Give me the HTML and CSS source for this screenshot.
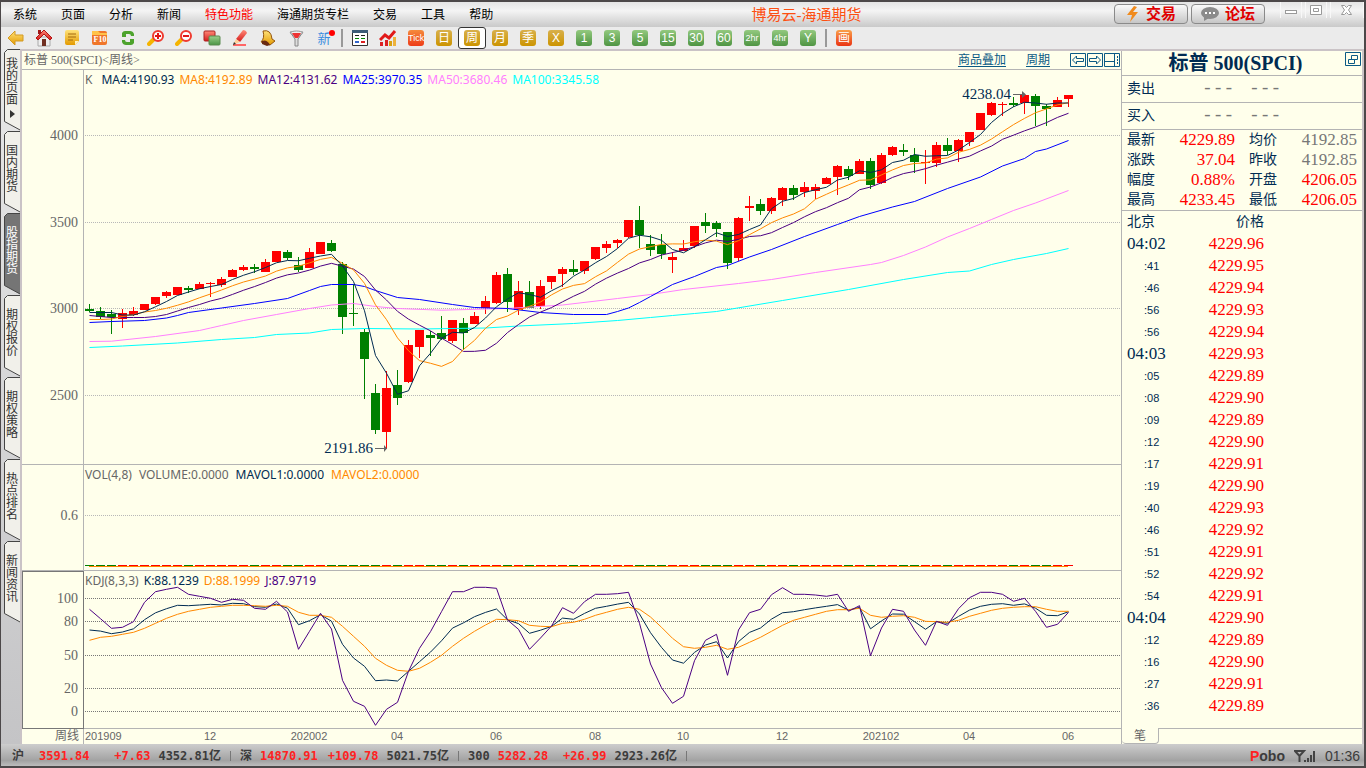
FILE: index.html
```
<!DOCTYPE html>
<html lang="zh-CN">
<head>
<meta charset="utf-8">
<title>博易云-海通期货</title>
<link rel="stylesheet" href="styles.css">
</head>
<body>
<div class="window">
  <header class="menubar">
    <nav class="menu">
      <button>系统</button><button>页面</button><button>分析</button><button>新闻</button><button class="hot">特色功能</button><button>海通期货专栏</button><button>交易</button><button>工具</button><button>帮助</button>
    </nav>
    <h1 class="app-title">博易云-海通期货</h1>
    <div class="quick">
      <button class="pill"><svg width="14" height="16" viewBox="0 0 14 16"><path d="M8 0 1 9h5l-2 7 8-10H7l4-5z" fill="#f08a1c"/></svg>交易</button>
      <button class="pill"><svg width="18" height="14" viewBox="0 0 18 14"><ellipse cx="9" cy="6" rx="9" ry="6" fill="#8b8b8b"/><path d="M3 9v5l5-3z" fill="#8b8b8b"/><path d="M4 5h2v2H4zM8 5h2v2H8zM12 5h2v2h-2z" fill="#fff"/></svg>论坛</button>
    </div>
    <div class="winctl">
      <button aria-label="最小化"><svg width="14" height="12"><rect x="1.500" y="6.500" width="11" height="3" fill="#fff" stroke="#999"/></svg></button>
      <button aria-label="最大化"><svg width="14" height="12"><path d="M1.500 1.500h11v9h-11zM4.500 4.500h5v3h-5z" fill="#fff" stroke="#999"/></svg></button>
      <button class="close" aria-label="关闭"><svg width="14" height="12"><path d="M1.500 1.500h3l2 2 2-2h3L8.500 6l3 4.500h-3l-2-2-2 2h-3l3-4.500z" fill="#fff" stroke="#999"/></svg></button>
    </div>
  </header>

  <div class="toolbar">
    <svg width="0" height="0" class="defs"><defs>
      <linearGradient id="gold" x2="0" y2="1"><stop offset="0" stop-color="#ffe27a"/><stop offset="1" stop-color="#e39a00"/></linearGradient>
      <linearGradient id="red" x2="0" y2="1"><stop offset="0" stop-color="#ff8a78"/><stop offset="1" stop-color="#d41a1a"/></linearGradient>
      <linearGradient id="green" x2="0" y2="1"><stop offset="0" stop-color="#9bd08c"/><stop offset="1" stop-color="#4a9445"/></linearGradient>
    </defs></svg>
    <button aria-label="后退"><svg width="18" height="18"><path d="M1 9 8 2v4h8v6H8v4z" fill="url(#gold)" stroke="#d39a22"/></svg></button>
    <button aria-label="首页"><svg width="18" height="18"><path d="M3 8h12v9H3z" fill="#eee" stroke="#aaa"/><path d="M3 1h3v4H3z" fill="#a01717"/><path d="M9 1 1 9l2 2 6-6 6 6 2-2z" fill="url(#red)" stroke="#b31414"/><path d="M7 10h4v7H7z" fill="#703022"/></svg></button>
    <button aria-label="资讯"><svg width="18" height="18"><path d="M2 3q0-2 2-2h10q2 0 2 2v9l-4 4H4q-2 0-2-2z" fill="url(#gold)"/><path d="M5 5h8M5 8h8M5 11h5" stroke="#a56a10"/><path d="m12 16 4-4h-4z" fill="#fff3c0"/></svg></button>
    <button aria-label="F10资料"><svg width="18" height="18"><rect x="1" y="2" width="15" height="14" rx="2" fill="#f0762a"/><path d="M1 2h6l2 2h7v2H1z" fill="#ffc34a"/><text x="9" y="13" class="f10">F10</text></svg></button>
    <button aria-label="刷新"><svg width="18" height="18"><path d="M3 8V4q1-2 3-2h5q3 0 4 3v2h-3q0-2-2-2H7v3zM15 10v4q-1 2-3 2H7q-3 0-4-3v-2h3q0 2 2 2h3v-3z" fill="#4da32d"/></svg></button>
    <button aria-label="放大"><svg width="18" height="18"><path d="m7 10-5 5" stroke="#f5b400" stroke-width="4" stroke-linecap="round"/><circle cx="11" cy="7" r="5" fill="#fff" stroke="#ef3b30" stroke-width="2"/><path d="M8 7h6M11 4v6" stroke="#e01818" stroke-width="2"/></svg></button>
    <button aria-label="缩小"><svg width="18" height="18"><path d="m7 10-5 5" stroke="#f5b400" stroke-width="4" stroke-linecap="round"/><circle cx="11" cy="7" r="5" fill="#fff" stroke="#ef3b30" stroke-width="2"/><path d="M8 7h6" stroke="#e01818" stroke-width="2"/></svg></button>
    <button aria-label="叠加"><svg width="18" height="18"><rect x="1" y="2" width="11" height="10" rx="1" fill="url(#red)" stroke="#a22"/><rect x="6" y="7" width="11" height="9" rx="1" fill="url(#green)" stroke="#5a8c50"/></svg></button>
    <button aria-label="画线"><svg width="18" height="18"><path d="M2 16h13" stroke="#f66" stroke-width="2"/><path d="m5 10 7-9q3 0 4 3l-7 9z" fill="url(#red)"/><path d="m5 10 4 3-7 3z" fill="#ffcf9a"/><path d="m2 16 1-3 2 2z" fill="#333"/></svg></button>
    <button aria-label="预警"><svg width="18" height="18"><path d="M4 2q8-2 9 8l3 2-5 4-9-3q4-4 2-11z" fill="url(#gold)" stroke="#95560c"/><path d="M3 12q5-2 8 4l-3 1-5-2z" fill="#6a2a10"/></svg></button>
    <button aria-label="筛选"><svg width="18" height="18"><path d="M3 3h13l-5 7v7H8v-7z" fill="#ddd" stroke="#888"/><ellipse cx="9.500" cy="4" rx="6" ry="2" fill="#eee" stroke="#999"/><path d="M5 4h9l-3 5H8z" fill="#e33"/></svg></button>
    <button class="new" aria-label="新功能">新<i></i></button>
    <span class="sep"></span>
    <button aria-label="报价"><svg width="18" height="18"><path d="M1.500 1.500h15v15h-15z" fill="#fff" stroke="#333"/><path d="M1 1h16v3H1z" fill="#3c5c78"/><path d="M4 6.500h4M10 6.500h4" stroke="#222"/><path d="M4 9.500h4M10 9.500h4" stroke="#080"/><path d="M4 13h4" stroke="#36c" stroke-width="2"/><path d="M10 13h4" stroke="#d22" stroke-width="2"/></svg></button>
    <button aria-label="走势"><svg width="18" height="18"><path d="M1 13h3v4H1zM6 11h3v6H6z" fill="#d22"/><path d="M10 12h3v5h-3z" fill="#d8a010"/><path d="M14 8h3v9h-3z" fill="#edb23c"/><path d="m1 11 5-5 4 3 6-7" fill="none" stroke="#e11919" stroke-width="3"/></svg></button>
    <button class="chip tick"><span>Tick</span></button>
    <button class="chip gold"><span>日</span></button>
    <button class="chip gold on"><span>周</span></button>
    <button class="chip gold"><span>月</span></button>
    <button class="chip gold"><span>季</span></button>
    <button class="chip gold"><span>X</span></button>
    <button class="chip green"><span>1</span></button>
    <button class="chip green"><span>3</span></button>
    <button class="chip green"><span>5</span></button>
    <button class="chip green"><span>15</span></button>
    <button class="chip green"><span>30</span></button>
    <button class="chip green"><span>60</span></button>
    <button class="chip green small"><span>2hr</span></button>
    <button class="chip green small"><span>4hr</span></button>
    <button class="chip green"><span>Y</span></button>
    <span class="sep"></span>
    <button class="chip draw"><span>画</span></button>
  </div>

  <main class="body">
    <nav class="tabs" id="tabs"></nav>

    <section class="chart">
      <div class="chart-head">
        <span>标普 500(SPCI)&lt;周线&gt;</span>
        <div class="head-links">
          <a href="#">商品叠加</a><a href="#">周期</a>
          <div class="head-btns">
            <button aria-label="左移"><svg width="17" height="15"><path d="M.5.5h15v13H.5zM2.500 7l4-4v2.500h7v3h-7V11z" fill="none" stroke="#0b5a85"/></svg></button>
            <button aria-label="右移"><svg width="17" height="15"><path d="M.5.5h15v13H.5zM13.500 7l-4-4v2.500h-7v3h7V11z" fill="none" stroke="#0b5a85"/></svg></button>
            <button aria-label="分栏"><svg width="17" height="15"><path d="M.5.5h15v13H.5zM10.500 1v13M1 8.500h9" fill="none" stroke="#0b5a85"/><path d="M13.500 3v9" stroke="#0b5a85" stroke-dasharray="2 1"/></svg></button>
          </div>
        </div>
      </div>
      <div class="axis"><svg><text x="56" y="70">4000</text><text x="56" y="157">3500</text><text x="56" y="243">3000</text><text x="56" y="330">2500</text></svg></div>
      <div class="pane">
        <div class="legend"><span class="k">K</span><span class="navy">MA4:4190.93</span><span class="orange">MA8:4192.89</span><span class="purple">MA12:4131.62</span><span class="blue">MA25:3970.35</span><span class="pink">MA50:3680.46</span><span class="cyan">MA100:3345.58</span></div>
        <svg id="price" role="img" aria-label="K线"></svg>
      </div>
      <div class="axis"><svg><text x="56" y="55">0.6</text></svg></div>
      <div class="pane">
        <div class="legend loose"><span>VOL(4,8)</span><span>VOLUME:0.0000</span><span class="navy">MAVOL1:0.0000</span><span class="orange">MAVOL2:0.0000</span></div>
        <svg id="volume" role="img" aria-label="成交量"></svg>
      </div>
      <div class="axis focus"><svg><text x="55" y="31">100</text><text x="55" y="54">80</text><text x="55" y="88">50</text><text x="55" y="121">20</text><text x="55" y="144">0</text></svg></div>
      <div class="pane">
        <div class="legend"><span>KDJ(8,3,3)</span><span class="navy">K:88.1239</span><span class="orange">D:88.1999</span><span class="purple">J:87.9719</span></div>
        <svg id="kdj" role="img" aria-label="KDJ"></svg>
      </div>
      <div class="axis period">周线</div>
      <div class="pane dates"><svg id="dates"></svg></div>
    </section>

    <aside class="quote">
      <div class="quote-title"><h2>标普 500(SPCI)</h2><button aria-label="弹出"><svg width="17" height="15"><path d="M.5.5h15v13H.5z" fill="none" stroke="#0b5a85"/><path d="M6.500 3.500h6v4h-6z" fill="none" stroke="#0b5a85"/><path d="M3.500 7.500h6v4h-6z" fill="#ffffeb" stroke="#0b5a85"/></svg></button></div>
      <div class="book"><span>卖出</span><span class="dash">---</span><span class="dash">---</span></div>
      <div class="book"><span>买入</span><span class="dash">---</span><span class="dash">---</span></div>
      <table class="stats">
        <tr><th>最新</th><td>4229.89</td><th class="second">均价</th><td class="flat">4192.85</td></tr>
        <tr><th>涨跌</th><td>37.04</td><th class="second">昨收</th><td class="flat">4192.85</td></tr>
        <tr><th>幅度</th><td>0.88%</td><th class="second">开盘</th><td>4206.05</td></tr>
        <tr><th>最高</th><td>4233.45</td><th class="second">最低</th><td>4206.05</td></tr>
      </table>
      <div class="tape">
        <table class="ticks">
          <thead><tr><th>北京</th><th>价格</th></tr></thead>
          <tbody id="ticks"></tbody>
        </table>
      </div>
      <div class="quote-foot"><button>笔</button><span></span></div>
    </aside>
  </main>

  <footer class="status">
    <div class="index"><span class="name">沪</span><span class="up">3591.84</span><span class="up chg">+7.63</span><span>4352.81亿</span></div>
    <div class="index"><span>深</span><span class="up">14870.91</span><span class="up chg">+109.78</span><span>5021.75亿</span></div>
    <div class="index"><span>300</span><span class="up">5282.28</span><span class="up chg">+26.99</span><span>2923.26亿</span></div>
    <div class="sys"><span class="brand"><b>P</b>obo</span><svg width="22" height="13"><path d="M1 1h9L5.500 6zM5.500 5v7" fill="none" stroke="#444" stroke-width="2"/><path d="M10 10h2v2h-2zM13 8h2v4h-2zM16 5h2v7h-2zM19 1h2v11h-2z" fill="#444"/></svg><time>01:36</time></div>
  </footer>
</div>
<script src="app.js"></script>
</body>
</html>
```
FILE: styles.css
```
* { box-sizing: border-box; }
body {
  margin: 0;
  font: 12px/1 "Liberation Serif", "Noto Sans CJK SC", serif;
  color: #002b52;
}
button {
  margin: 0;
  padding: 0;
  border: 0;
  background: none;
  font: inherit;
  color: inherit;
}
svg { display: block; }
.window {
  display: flex;
  flex-direction: column;
  height: 100vh;
  border: solid #4c4849;
  border-width: 2px 2px 2px 1px;
  background: #ebebeb;
}
.defs { position: absolute; }

.menubar {
  display: flex;
  flex: none;
  height: 25px;
  background: linear-gradient(#e4e4e4, #f4f4f4 35%, #c9c9c9);
}
.menu { display: flex; color: #000; }
.menu button { padding: 1px 12px 0; }
.menu .hot { color: #f00; }
.app-title {
  flex: 1;
  margin: 0;
  padding-right: 6px;
  text-align: center;
  font-size: 15px;
  font-weight: 400;
  line-height: 26px;
  color: #fd4f11;
}
.quick { display: flex; gap: 3px; padding: 2px 15px 3px 0; }
.pill {
  display: flex;
  align-items: center;
  justify-content: center;
  gap: 6px;
  width: 74px;
  border: 1px solid #8a8a8a;
  border-radius: 4px;
  background: linear-gradient(#fafafa, #c6c6c6);
  font-size: 15px;
  font-weight: 700;
  color: #e00000;
}
.winctl { display: flex; gap: 3px; padding-bottom: 9px; }
.winctl button {
  display: grid;
  place-items: center;
  width: 22px;
  border: solid #f8f8f8;
  border-width: 0 1px;
}
.winctl .close { width: 34px; }

.toolbar {
  display: flex;
  flex: none;
  height: 24px;
  padding-left: 1px;
  border-bottom: 2px solid #cac3c6;
  background: #ebebeb;
}
.toolbar button { display: grid; place-items: center; width: 28px; }
.sep { width: 2px; margin: 2px 3px; background: #999; }
.f10 { font: 700 8px "Liberation Serif", serif; text-anchor: middle; fill: #fff; }
.toolbar .new { position: relative; font-size: 13px; color: #3a8de0; }
.new i {
  position: absolute;
  top: 3px;
  right: 3px;
  width: 6px;
  height: 6px;
  border-radius: 50%;
  background: #f00;
}
.chip span {
  width: 16px;
  height: 16px;
  border-radius: 3px;
  font: 12px/16px "Liberation Sans", "Noto Sans CJK SC", sans-serif;
  color: #fff;
}
.chip.tick span { background: linear-gradient(#f58a3c, #ee3c18); font-size: 9px; }
.chip.gold span { background: linear-gradient(#d8b04c, #cc9400); }
.chip.green span { background: linear-gradient(#93c97f, #4f9543); }
.chip.small span { font-size: 9px; }
.chip.draw span { background: linear-gradient(#f9a04a, #ea3412); }
.toolbar .on { border: 1px solid #333; border-radius: 3px; background: #fff; }

.body {
  display: grid;
  flex: 1;
  grid-template-columns: 21px 1fr 243px;
  grid-template-rows: minmax(0, 1fr);
  min-height: 0;
}
.tabs {
  display: flex;
  flex-direction: column;
  padding-left: 3px;
  margin-top: -2px;
  border-right: 2px solid #cac3c6;
  background: linear-gradient(#e8e8e8, #c4c4c6);
}
.tabs button {
  position: relative;
  display: flex;
  flex: none;
  flex-direction: column;
  align-items: center;
  height: 82px;
  padding-top: 14px;
  color: #333;
}
.tabs button:first-child { padding-top: 9px; }
.tabs svg { position: absolute; inset: 0; }
.tabs polygon { fill: #f1f0ea; stroke: #444; }
.tabs .on polygon { fill: #757575; }
.tabs .on { color: #fff; }
.tabs span { position: relative; width: 12px; line-height: 12px; word-break: break-all; }
.tabs em { position: relative; margin-top: 4px; border: solid transparent; border-width: 4px 0 4px 5px; border-left-color: #333; }

.chart {
  display: grid;
  grid-template-columns: 62px 1fr;
  grid-template-rows: 19px minmax(0, 395fr) minmax(0, 106fr) minmax(0, 158fr) 15px;
  min-width: 0;
  background: #ffffeb;
  color: #666;
}
.chart-head {
  grid-column: 1 / 3;
  display: flex;
  justify-content: space-between;
  align-items: center;
  padding-left: 2px;
  border-bottom: 1px solid #b4b4b4;
}
.head-links { display: flex; align-items: center; }
.head-links a { margin-right: 20px; color: #0b5a85; text-underline-offset: 2px; }
.head-btns { display: flex; }
.axis { overflow: hidden; border-right: 1px solid #b4b4b4; border-bottom: 1px solid #b4b4b4; }
.axis svg { width: 100%; height: 100%; }
.axis text { font-size: 14px; text-anchor: end; fill: #666; }
.axis.focus { border: 1px solid #777; }
.axis.period { border-bottom: 0; padding-right: 4px; text-align: right; line-height: 14px; }
.pane { position: relative; min-width: 0; overflow: hidden; border-bottom: 1px solid #b4b4b4; }
.pane svg { width: 100%; height: 100%; }
.pane.dates { border-bottom: 0; }
.dates text { font: 11px "Liberation Sans", sans-serif; fill: #666; text-anchor: middle; }
.dates .start { text-anchor: start; }
.legend {
  position: absolute;
  top: 1px;
  left: 1px;
  display: flex;
  gap: 5px;
  font: 12px/17px "Noto Sans", sans-serif;
}
.legend.loose { gap: 7px; }
.legend .k { margin-right: 4px; }
.navy { color: #002b52; }
.orange { color: #ff8800; }
.purple { color: #4b0082; }
.blue { color: #0000ff; }
.pink { color: #ff80ff; }
.cyan { color: #00ffff; }
.line { fill: none; stroke: currentColor; stroke-width: 1; }
.grid { stroke: #b8b8b8; stroke-dasharray: 1 1; shape-rendering: crispEdges; }
.grid.dark { stroke: #777; }
.rise { fill: #f00; }
.fall { fill: #008000; }
.mark { font-size: 15px; fill: #002b52; text-anchor: end; }
.arrow { fill: #666; }

.quote {
  display: flex;
  flex-direction: column;
  min-height: 0;
  border-left: 1px solid #b4b4b4;
  border-right: 2px solid #cac3c6;
  background: #ffffeb;
}
.quote-title { display: flex; flex: none; height: 25px; border-bottom: 1px solid #b4b4b4; }
.quote-title h2 { flex: 1; margin: 0; padding-left: 4px; text-align: center; font-size: 20px; line-height: 25px; }
.quote-title button { align-self: flex-start; padding-top: 1px; }
.book {
  display: flex;
  flex: none;
  align-items: center;
  height: 27px;
  padding-left: 5px;
  border-bottom: 1px solid #b4b4b4;
  font-size: 14px;
}
.dash { width: 47px; font: 18px/20px "Liberation Mono", monospace; color: #777; }
.book span:first-child { width: 75px; }
table { border-collapse: collapse; table-layout: fixed; }
th, td { padding: 0; font-weight: 400; text-align: left; }
th { font-size: 14px; }
td { font-size: 17px; line-height: 16px; color: #f00; }
.stats { flex: none; width: 230px; margin-left: 5px; }
.stats tr { height: 20px; }
.stats th { width: 40px; }
.stats td { width: 68px; text-align: right; }
.stats .second { width: 54px; padding-left: 14px; }
.stats .flat { color: #777; }
.tape { flex: 1; min-height: 0; overflow: hidden; padding-left: 5px; border-top: 1px solid #b4b4b4; }
.ticks { width: 137px; }
.ticks tr { height: 22px; }
.ticks th:last-child, .ticks td:last-child { text-align: right; }
.ticks td:first-child { color: #002b52; }
.ticks .sec { padding-left: 17px; font: 11px "Liberation Sans", sans-serif; }
.quote-foot { display: flex; flex: none; height: 16px; }
.quote-foot button {
  width: 37px;
  border: solid #b4b4b4;
  border-width: 0 1px 1px 0;
  border-radius: 0 0 4px 4px;
  color: #666;
}
.quote-foot span { flex: 1; border-top: 1px solid #b4b4b4; }

.status {
  display: flex;
  flex: none;
  align-items: center;
  height: 22px;
  padding: 2px 4px 0 11px;
  background: linear-gradient(#cdcdcd, #a2a2a2 75%, #bdbdbd);
  font: 700 12px/12px "DejaVu Sans Mono", "Noto Sans CJK SC", monospace;
  color: #3c3c3c;
}
.index { display: flex; gap: 8px; width: 209px; margin-right: 19px; position: relative; white-space: nowrap; }
.index::after {
  content: "";
  position: absolute;
  top: 1px;
  right: -10px;
  height: 10px;
  border-right: 1px solid #777;
}
.name { width: 19px; }
.up { color: #ff2222; }
.chg { margin-left: auto; }
.sys { display: flex; align-items: center; gap: 9px; margin-left: auto; }
.brand { font: 700 14px "Liberation Sans", sans-serif; }
.brand b { color: #ff2222; }
.sys time { font: 14px "Liberation Sans", sans-serif; }
```
FILE: app.js
```
// Side tabs
const tabs = ["我的页面", "国内期货", "股指期货", "期权报价", "期权策略", "热点排名", "新闻资讯"];
document.getElementById("tabs").innerHTML = tabs.map((t, i) =>
  `<button class="${i === 2 ? "on" : ""}"><svg width="16" height="82"><polygon points="0.5,3.5 3.5,0.5 17,0.5 17,81.500 0.5,72.500"/></svg><span>${t}</span>${i ? "" : "<em></em>"}</button>`).join("");

// Tick list: "mm:ss" rows start a new minute, ":ss" rows continue it
const ticks = "04:02 96,:41 95,:46 94,:56 93,:56 94,04:03 93,:05 89,:08 90,:09 89,:12 90,:17 91,:19 90,:40 93,:46 92,:51 91,:52 92,:54 91,04:04 90,:12 89,:16 90,:27 91,:36 89";
document.getElementById("ticks").innerHTML = ticks.split(",").map(r => {
  const [t, p] = r.split(" ");
  return `<tr><td${t[0] === ":" ? ' class="sec"' : ""}>${t}</td><td>4229.${p}</td></tr>`;
}).join("");

// One candle per week: direction, high, body top, body bottom, low (chart heights)
const candles = `G304,309,311,312 G307,311,317,319 G310,314,317,334 R309,313,319,328 R307,311,315,316
R304,304,310,310 R297,297,304,305 R291,292,296,298 R287,287,295,295 G286,288,290,293
R282,284,289,289 R282,283,284,297 R277,279,285,287 R269,270,277,277 R265,267,270,271
G264,267,269,273 R259,262,272,272 R251,251,262,262 G250,252,258,260 G257,265,270,272
R248,252,268,268 R242,242,254,254 G240,243,251,252 G262,264,317,334 G284,313,314,326
G329,332,359,399 G384,393,430,434 R371,388,432,449 G370,385,398,405 R340,345,382,383
R330,330,347,358 G331,335,338,356 G316,333,339,340 R320,320,341,343 G318,323,333,350
R312,316,324,324 R296,301,308,314 R272,275,303,304 G268,274,302,312 R281,291,310,315
G281,292,308,308 R280,286,306,309 R276,276,282,289 R267,269,274,287 G260,269,272,275
R261,261,271,274 R247,247,259,260 R241,244,248,253 R239,240,243,248 R220,220,237,238
G206,220,235,248 G235,244,250,256 G234,245,254,259 R252,257,260,273 R240,248,251,251
R226,226,246,248 G213,222,226,233 G221,223,229,237 G232,232,263,269 R217,218,258,261
R196,206,208,221 G199,204,211,215 R197,198,211,214 R187,188,200,206 G185,188,195,200
R182,187,192,197 R184,187,191,199 R177,178,184,184 R165,166,177,195 G166,169,176,180
R159,161,174,174 G158,161,185,189 R153,155,183,184 R146,147,155,156 G144,150,152,156
G148,155,162,173 R150,162,163,184 R142,145,163,167 G138,145,151,155 R139,140,151,162
R132,132,142,146 R113,113,130,130 R102,103,115,116 R102,104,105,116 G97,103,105,107
R94,95,103,114 G94,96,106,126 G104,106,109,126 R97,100,107,107 R95,95,99,107`
  .split(/\s+/).map(s => [s[0], ...s.slice(1).split(",").map(Number)]);

const X0 = 5, STEP = 11, TOP = 70;
const x = i => X0 + i * STEP;
const line = (pts, cls) => `<polyline class="line ${cls}" points="${pts.map(p => p.join(",")).join(" ")}"/>`;
const grid = (ys, cls = "") => ys.map(y => `<line class="grid ${cls}" x1="1" x2="100%" y1="${y}.5" y2="${y}.5"/>`).join("");

// Averages over the closing heights, with the opening stretch given
const closes = candles.map(c => c[0] === "R" ? c[2] : c[3]);
const average = (n, head) => closes.map((_, i) =>
  [x(i) + .5, (i < head.length ? head[i] : closes.slice(i - n + 1, i + 1).reduce((a, b) => a + b) / n) - TOP + .5]);
const sparse = s => s.split(" ").map(p => { const [i, y] = p.split(":"); return [x(+i) + .5, y - TOP + .5]; });

let out = grid([65, 152, 238, 325]);
candles.forEach(([d, hi, a, b, lo], i) => {
  const cls = d === "R" ? "rise" : "fall";
  out += `<rect class="${cls}" x="${x(i)}" y="${hi - TOP}" width="1" height="${lo - hi}"/><rect class="${cls}" x="${x(i) - 4}" y="${a - TOP}" width="9" height="${b - a}"/>`;
});
out += line(sparse("0:347 3:345.5 8:342.5 12:339 15:337 17:334 20:332.5 22:329 25:328 30:328.5 36:327.5 39:325.5 44:323 48:320 51:317 53:315 55:313 57:311 63:300 69:289 74:279 78:272 80:270.5 82:264 84:259 87:253 89:248"), "cyan");
out += line(sparse("0:341 2:340.7 6:336 10:330 11:327.5 12:325 14:320 17:314 20:308 22:304.5 24:303 26:306 28:308 32:309.7 38:308 43:304.5 48:298 51:294 54:289 59:283 62:279 66:272 71:264 72:262 74:255 76:246.5 78:236.5 80:228 82:219 84:210 86:202.5 89:190"), "pink");
out += line(sparse("0:322 2:321 5:320 7:317.5 8:315 9:312 12:307.5 15:303 18:298 20:290 21:286 22:284 24:284 25:286 26:290 28:297 30:299 33:304 35:307 38:308 41:312 44:314 47:314 48:311 49:307.5 50:302 51:296 53:284 55:276 57:267 58:265 60:256.5 62:249 65:236 68:224 70:216 73:206.5 75:201 78:188 81:176.5 83:165.5 85:158 86:151 87:148.5 89:140"), "blue");
out += line(average(12, [315, 316, 317, 317, 317, 317, 316, 314, 310.5, 307, 304]), "purple");
out += line(average(8, [319, 319, 318.5, 316, 314, 311.5, 310]), "orange");
out += line(average(4, [312, 312, 312]), "navy");
out += `<text class="mark" x="927" y="29">4238.04</text><path class="arrow" d="M929 24h9v-3l4 3.500-4 3.500v-3h-9z"/>`;
out += `<text class="mark" x="289" y="383">2191.86</text><path class="arrow" d="M291 378h9v-3l3 3.500-3 3.500v-3h-9z"/>`;
document.getElementById("price").innerHTML = out;

// Volume is nil all the way: a dash per week above the flat average
document.getElementById("volume").innerHTML = grid([50]) + line([[x(0), 101.5], [x(89), 101.5]], "orange")
  + candles.map((c, i) => `<rect class="${c[0] === "R" ? "rise" : "fall"}" x="${x(i) - 4}" y="100" width="9" height="1"/>`).join("");

// KDJ heights, three steps to a pixel; K lies between J and D
const J = [148,176,205,202,185,127,95,88,82,103,109,115,127,118,121,145,148,124,156,268,214,160,207,361,424,439,496,448,427,334,265,215,155,95,95,82,82,85,180,208,268,234,198,143,160,125,103,103,101,97,190,312,383,430,409,302,241,223,346,210,158,148,104,83,103,103,105,109,103,154,137,287,204,148,154,210,256,184,196,146,113,97,97,103,124,115,154,202,193,157];
const D = [241,232,229,223,217,205,190,175,163,154,148,142,139,136,136,137,139,136,139,157,166,166,172,199,229,259,295,316,331,334,325,307,286,259,235,214,195,178,179,182,196,199,200,190,187,178,166,157,148,142,148,171,202,235,260,265,262,256,268,262,247,232,214,196,181,172,163,154,149,149,145,166,172,169,167,172,184,185,187,181,169,160,151,145,142,140,140,148,154,154];
const kdj = v => v.map((n, i) => [x(i) + .5, (n / 3 - 11).toFixed(1)]);
document.getElementById("kdj").innerHTML = grid([27, 50, 84, 117, 140], "dark")
  + line(kdj(D.map((d, i) => (J[i] + 2 * d) / 3)), "navy") + line(kdj(D), "orange") + line(kdj(J), "purple");

// Month labels below the weeks they belong to
const months = [[11, "12"], [20, "202002"], [28, "04"], [37, "06"], [46, "08"], [54, "10"], [63, "12"], [72, "202102"], [80, "04"], [89, "06"]];
document.getElementById("dates").innerHTML = `<text class="start" x="1" y="11">201909</text>`
  + months.map(([i, t]) => `<text x="${x(i)}" y="11">${t}</text>`).join("");
```
